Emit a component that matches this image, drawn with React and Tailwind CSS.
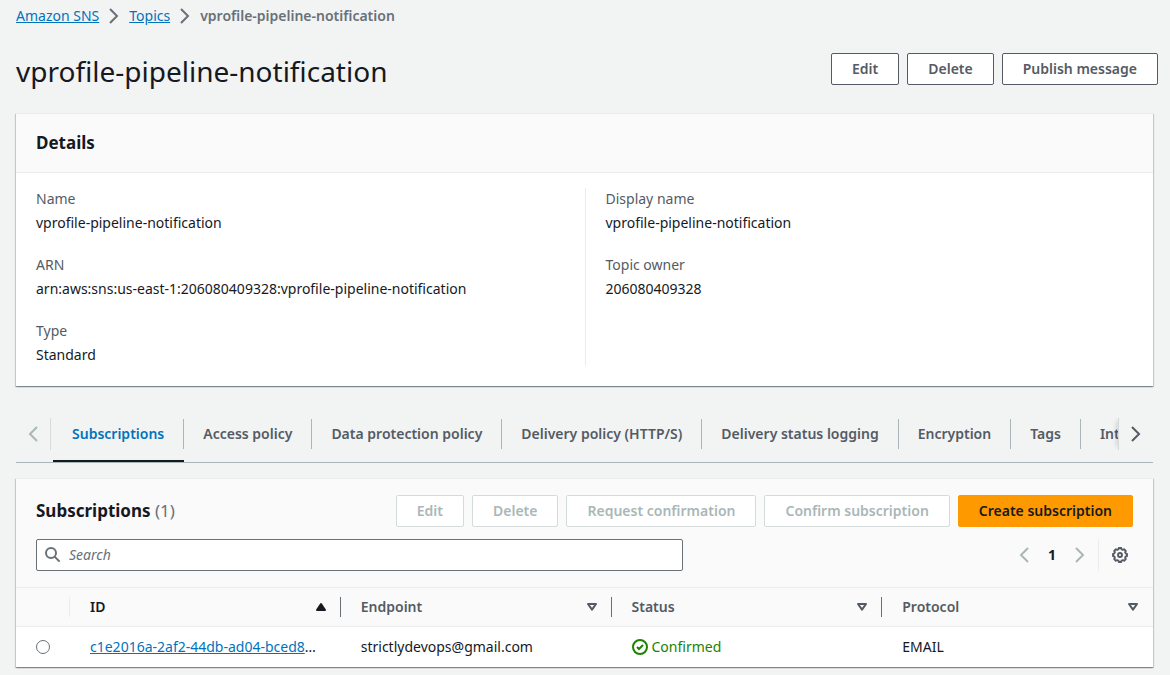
import React from "react";

function Chevron({ left = false, className = "" }) {
  return (
    <svg viewBox="0 0 16 16" className={`h-4 w-4 shrink-0 ${className}`} fill="none" stroke="currentColor" strokeWidth="2" aria-hidden="true">
      <path d={left ? "M12 1 5 8l7 7" : "M4 1l7 7-7 7"} />
    </svg>
  );
}

function Caret({ up = false }) {
  return (
    <svg viewBox="0 0 16 16" className="h-4 w-4 shrink-0" stroke="currentColor" strokeWidth="2" strokeLinejoin="round" fill={up ? "currentColor" : "none"} aria-hidden="true">
      <path d={up ? "M4 11h8L8 5z" : "M4 5h8l-4 5.6z"} />
    </svg>
  );
}

function Gear() {
  const points = [];
  for (let i = 0; i < 8; i++) {
    const base = (i * Math.PI) / 4;
    [[-0.26, 5.9], [-0.17, 7.1], [0.17, 7.1], [0.26, 5.9]].forEach(([offset, radius]) => {
      points.push(`${8 + radius * Math.sin(base + offset)},${8 - radius * Math.cos(base + offset)}`);
    });
  }
  return (
    <svg viewBox="0 0 16 16" className="h-4 w-4" fill="none" stroke="currentColor" strokeWidth="1.9" strokeLinejoin="round" aria-hidden="true">
      <polygon points={points.join(" ")} />
      <circle cx="8" cy="8" r="2" />
    </svg>
  );
}

function Button({ children, variant = "normal" }) {
  const styles = {
    normal: "border-[#545b64] bg-white text-[#545b64]",
    disabled: "border-[#d5dbdb] bg-white text-[#aab7b8]",
    primary: "border-[#ff9900] bg-[#ff9900] text-[#16191f]",
  };
  return (
    <button type="button" disabled={variant === "disabled"} className={`h-8 shrink-0 rounded-xs border px-5 font-semibold whitespace-nowrap ${styles[variant]}`}>
      {children}
    </button>
  );
}

const panel =
  "border-t border-[#eaeded] bg-white shadow-[0_1px_1px_0_rgba(0,28,36,0.3),1px_1px_1px_0_rgba(0,28,36,0.15),-1px_1px_1px_0_rgba(0,28,36,0.15)]";

function Field({ label, children }) {
  return (
    <div>
      <dt className="text-[#545b64]">{label}</dt>
      <dd className="mt-0.5">{children}</dd>
    </div>
  );
}

const tabs = [
  "Subscriptions",
  "Access policy",
  "Data protection policy",
  "Delivery policy (HTTP/S)",
  "Delivery status logging",
  "Encryption",
  "Tags",
  "Integrations",
];

const columns = ["ID", "Endpoint", "Status", "Protocol"];

export default function App() {
  return (
    <main className="min-h-screen bg-[#f2f3f3] pt-[5px] pr-[17px] pb-1.5 pl-4 font-['Noto_Sans',sans-serif] text-[14px] leading-[22px] text-[#16191f]">
      <nav aria-label="Breadcrumbs">
        <ol className="flex items-center gap-[7px]">
          <li className="flex items-center gap-[7px]">
            <a href="#sns" className="text-[#0073bb] underline">Amazon SNS</a>
            <Chevron className="text-[#687078]" />
          </li>
          <li className="flex items-center gap-[7px]">
            <a href="#topics" className="text-[#0073bb] underline">Topics</a>
            <Chevron className="text-[#687078]" />
          </li>
          <li className="font-semibold text-[#687078]">vprofile-pipeline-notification</li>
        </ol>
      </nav>

      <header className="-mr-[5px] mt-[26px] flex items-start justify-between">
        <h1 className="text-[28px] leading-9">vprofile-pipeline-notification</h1>
        <div className="flex gap-2">
          <Button>Edit</Button>
          <Button>Delete</Button>
          <Button>Publish message</Button>
        </div>
      </header>

      <section className={`mt-6 ${panel}`}>
        <div className="border-b border-[#eaeded] bg-[#fafafa] px-5 py-[18px]">
          <h2 className="text-[17px] leading-[22px] font-bold">Details</h2>
        </div>
        <dl className="grid grid-cols-2 px-5 pt-[15px] pb-5">
          <div className="space-y-5">
            <Field label="Name">vprofile-pipeline-notification</Field>
            <Field label="ARN">arn:aws:sns:us-east-1:206080409328:vprofile-pipeline-notification</Field>
            <Field label="Type">Standard</Field>
          </div>
          <div className="space-y-5 border-l border-[#eaeded] pl-5">
            <Field label="Display name">vprofile-pipeline-notification</Field>
            <Field label="Topic owner">206080409328</Field>
          </div>
        </dl>
      </section>

      <div className="mt-[27px] flex h-[50px] border-b border-[#aab7b8]">
        <button type="button" aria-label="Scroll left" disabled className="mt-[5px] flex h-8 w-[35px] shrink-0 items-center justify-center border-r border-[#d5dbdb] text-[#aab7b8]">
          <Chevron left />
        </button>
        <div role="tablist" className="ml-0.5 flex min-w-0 flex-1 overflow-hidden">
          {tabs.map((tab, i) => (
            <button
              key={tab}
              type="button"
              role="tab"
              aria-selected={i === 0}
              className={`flex shrink-0 items-start border-b-2 pt-1.5 font-semibold whitespace-nowrap ${i === 0 ? "border-[#16191f] text-[#0073bb]" : "border-transparent text-[#545b64]"}`}
            >
              <span className="flex h-[30px] items-center border-r border-[#aab7b8] px-[19px]">{tab}</span>
            </button>
          ))}
        </div>
        <button type="button" aria-label="Scroll right" className="mt-[5px] flex h-8 w-[35px] shrink-0 items-center justify-center border-l border-[#d5dbdb] text-[#545b64] shadow-[-5px_0_4px_-3px_rgba(0,28,36,0.12)]">
          <Chevron />
        </button>
      </div>

      <section className={`mt-[15px] ${panel}`}>
        <div className="bg-[#fafafa] px-5 pt-4 pb-4">
          <div className="flex items-center justify-between">
            <h2 className="text-[17px] leading-[22px] font-bold">
              Subscriptions <span className="font-normal text-[#687078]">(1)</span>
            </h2>
            <div className="flex gap-2">
              <Button variant="disabled">Edit</Button>
              <Button variant="disabled">Delete</Button>
              <Button variant="disabled">Request confirmation</Button>
              <Button variant="disabled">Confirm subscription</Button>
              <Button variant="primary">Create subscription</Button>
            </div>
          </div>
          <div className="mt-3 flex items-center justify-between">
            <label className="flex h-8 w-[59%] items-center gap-2 rounded-xs border border-[#687078] bg-white px-2 text-[#687078]">
              <svg viewBox="0 0 16 16" className="h-4 w-4 shrink-0" fill="none" stroke="currentColor" strokeWidth="2" aria-hidden="true">
                <circle cx="6" cy="6" r="5" />
                <path d="m9.6 9.6 5 5" />
              </svg>
              <input type="text" aria-label="Search" placeholder="Search" className="min-w-0 flex-1 outline-none placeholder:text-[#687078] placeholder:italic" />
            </label>
            <div className="flex items-center">
              <button type="button" aria-label="Previous page" disabled className="text-[#aab7b8]"><Chevron left /></button>
              <button type="button" aria-label="Page 1" className="w-10 text-center font-bold">1</button>
              <button type="button" aria-label="Next page" disabled className="text-[#aab7b8]"><Chevron /></button>
              <div className="ml-2.5 flex h-8 items-center border-l border-[#eaeded] pr-[5px] pl-[13px]">
                <button type="button" aria-label="Preferences" className="text-[#545b64]"><Gear /></button>
              </div>
            </div>
          </div>
        </div>
        <table className="w-full table-fixed border-collapse text-left">
          <thead className="bg-[#fafafa]">
            <tr className="h-[39px] border-y border-[#eaeded]">
              <th className="w-[54px] p-0" aria-label="Select">
                <div className="h-5 border-r border-[#eaeded]" />
              </th>
              {columns.map((column, i) => (
                <th key={column} className="p-0 font-semibold" aria-sort={i === 0 ? "ascending" : "none"}>
                  <button type="button" className={`flex h-5 w-full items-center justify-between pl-5 ${i === 0 ? "text-[#16191f]" : "text-[#545b64]"} ${i < 3 ? "border-r border-[#687078] pr-[11px]" : "pr-3"}`}>
                    {column}
                    <Caret up={i === 0} />
                  </button>
                </th>
              ))}
            </tr>
          </thead>
          <tbody>
            <tr className="h-10">
              <td className="p-0 pl-5">
                <input type="radio" name="subscription" aria-label="Select subscription" className="block h-3.5 w-3.5 appearance-none rounded-full border border-[#687078] bg-white" />
              </td>
              <td className="truncate px-5 py-0">
                <a href="#subscription" className="text-[#0073bb] underline">c1e2016a-2af2-44db-ad04-bced8</a>…
              </td>
              <td className="truncate px-5 py-0">strictlydevops@gmail.com</td>
              <td className="px-5 py-0">
                <span className="flex items-center gap-1 text-[#1d8102]">
                  <svg viewBox="0 0 16 16" className="h-4 w-4 shrink-0" fill="none" stroke="currentColor" strokeWidth="2" aria-hidden="true">
                    <circle cx="8" cy="8" r="7" />
                    <path d="m5 8 2 2 4-4" />
                  </svg>
                  Confirmed
                </span>
              </td>
              <td className="px-5 py-0">EMAIL</td>
            </tr>
          </tbody>
        </table>
      </section>
    </main>
  );
}
